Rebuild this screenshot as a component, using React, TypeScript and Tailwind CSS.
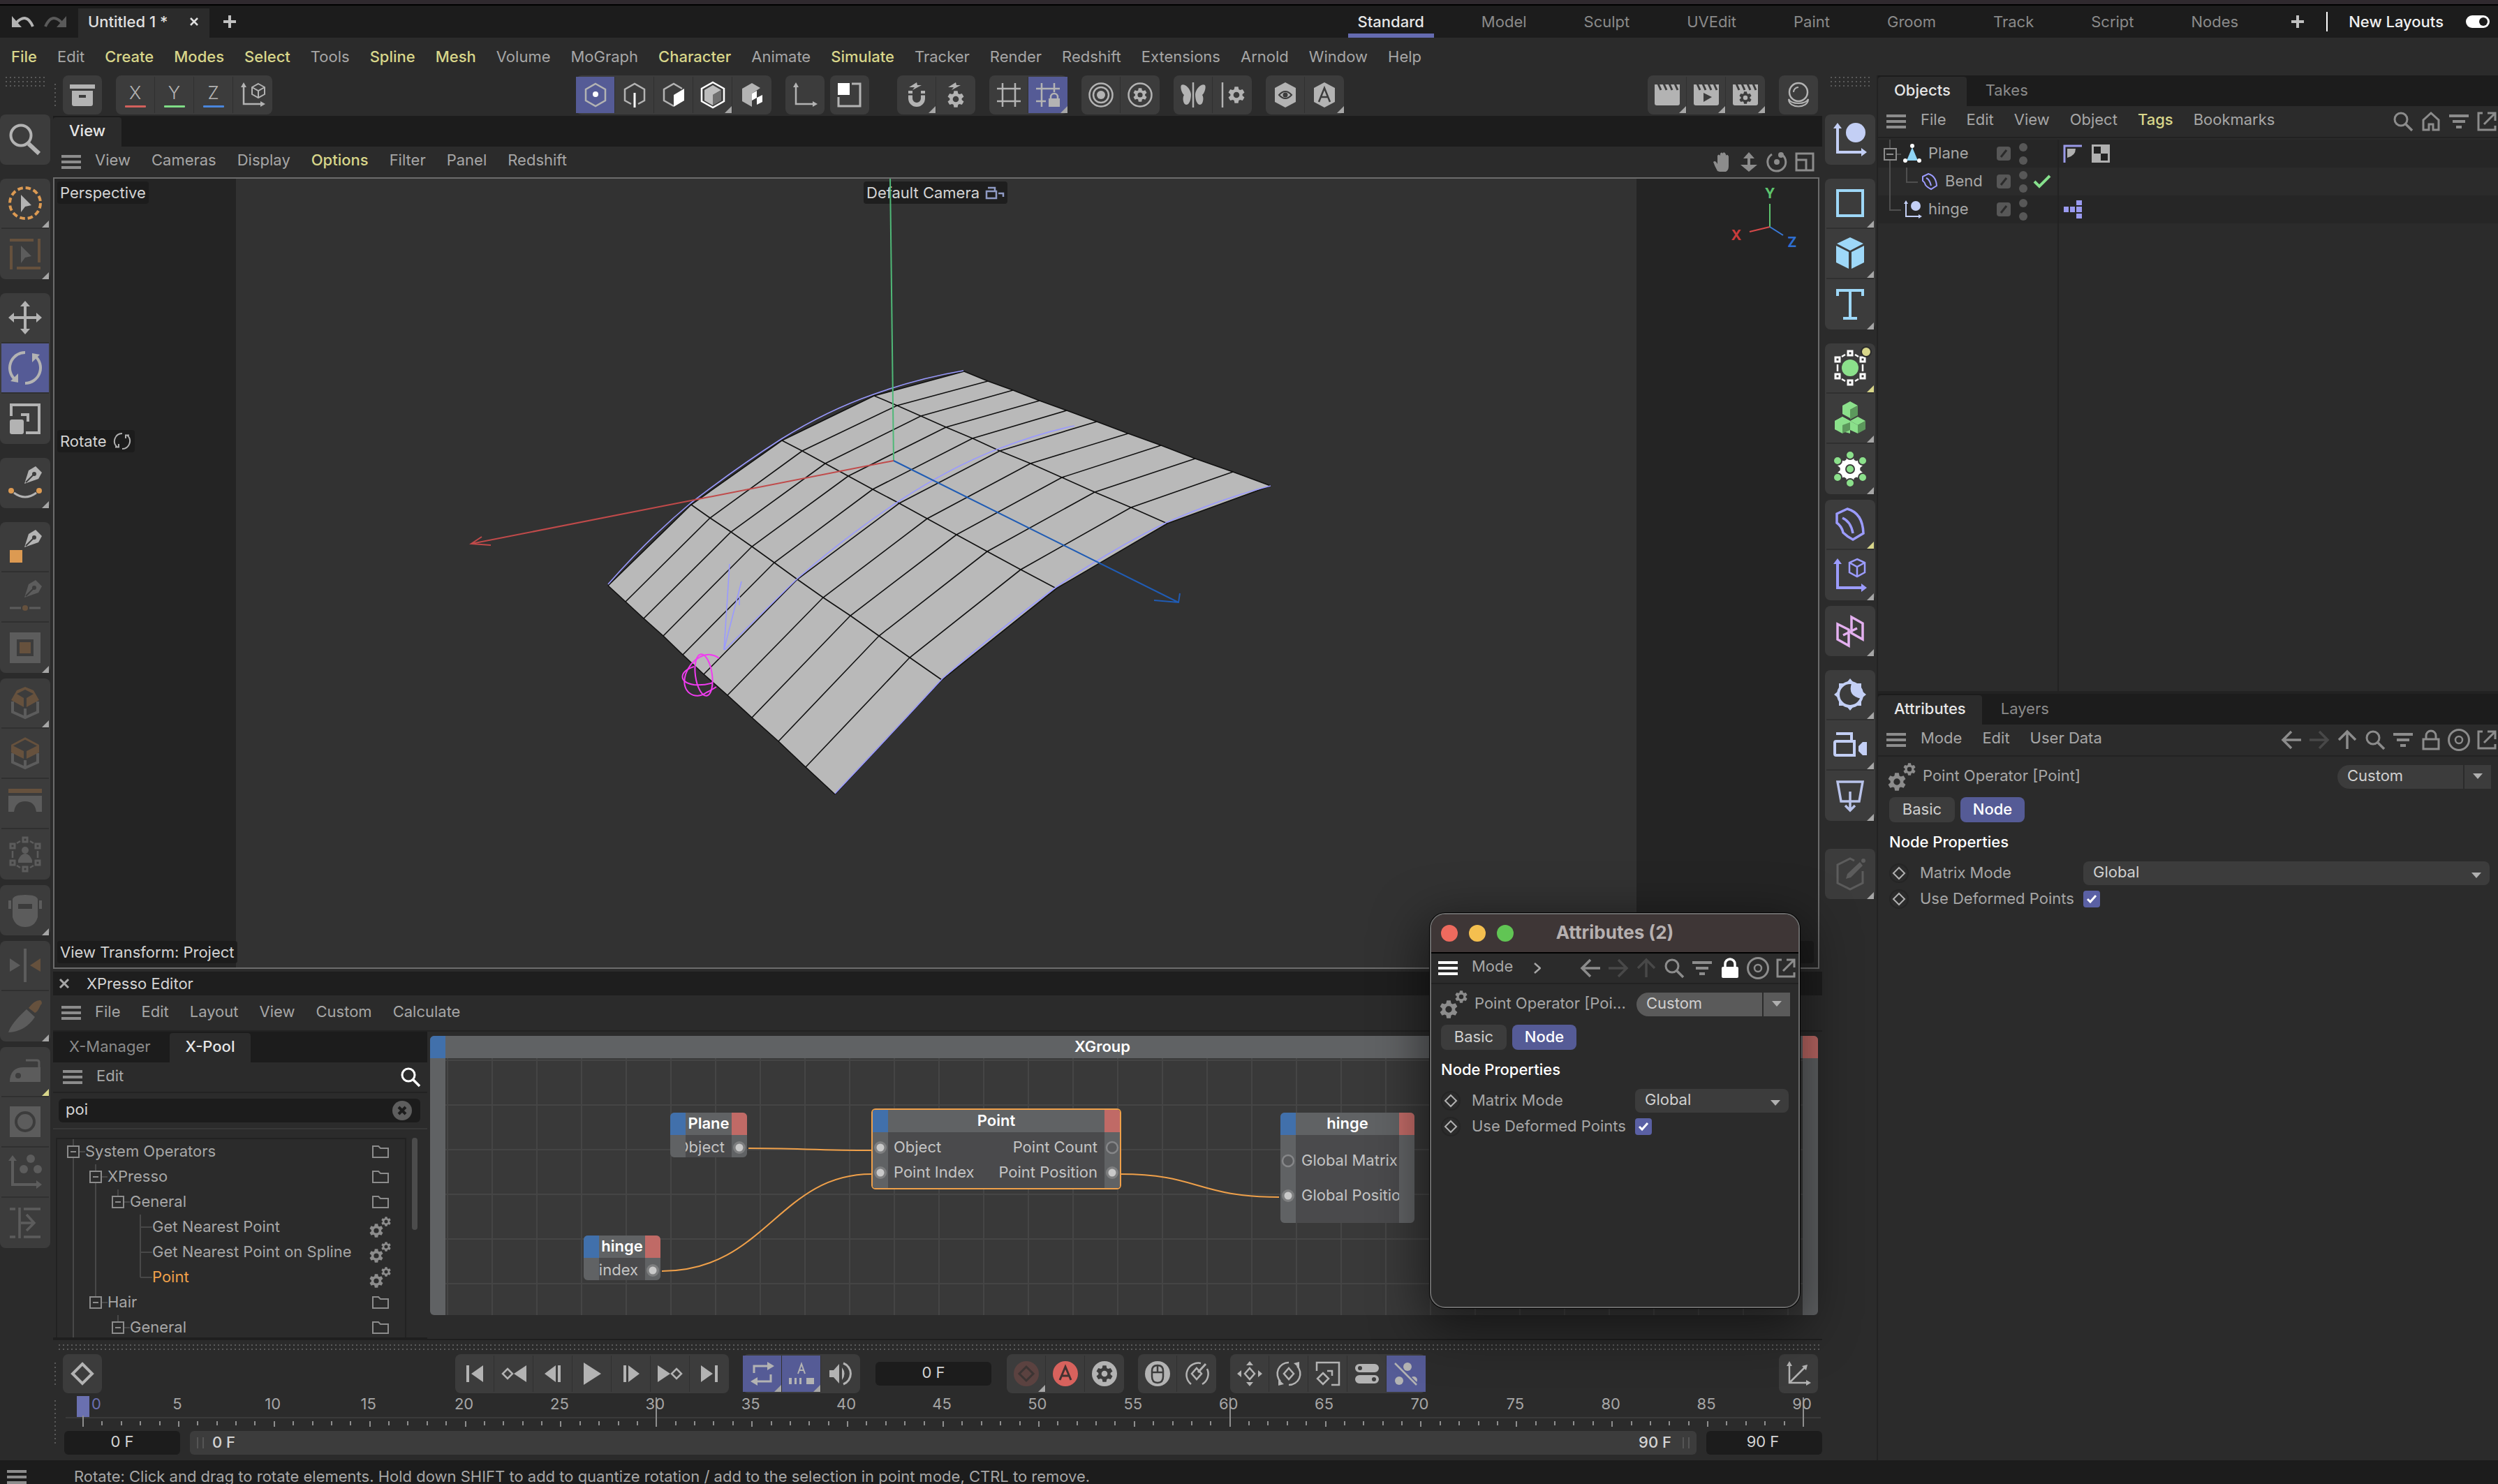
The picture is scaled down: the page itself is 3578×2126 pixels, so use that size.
import { useId, useState, type ReactNode } from "react";
import clsx from "clsx";

/* ---------- shared drawing helpers ---------- */

function Svg({ size, children, className }: { size: number; children: ReactNode; className?: string }) {
  return (
    <svg
      width={size}
      height={size}
      viewBox={`0 0 ${size} ${size}`}
      fill="none"
      className={clsx("shrink-0 overflow-visible", className)}
      aria-hidden="true"
    >
      {children}
    </svg>
  );
}

function gearPath(cx: number, cy: number, r: number, hole = 0.36, teeth = 6) {
  const pts: string[] = [];
  const step = (Math.PI * 2) / teeth;
  for (let i = 0; i < teeth; i++) {
    const a = i * step - Math.PI / 2;
    for (const [off, k] of [[-0.36, 0.72], [-0.2, 1], [0.2, 1], [0.36, 0.72]]) {
      const t = a + off * step * 1.05;
      pts.push(`${(cx + Math.cos(t) * r * k).toFixed(1)} ${(cy + Math.sin(t) * r * k).toFixed(1)}`);
    }
  }
  const h = r * hole;
  const ring = `M${cx - h} ${cy}a${h} ${h} 0 1 0 ${h * 2} 0a${h} ${h} 0 1 0 ${-h * 2} 0z`;
  return `M${pts.join("L")}z${hole ? ring : ""}`;
}

const Gear = ({ x, y, r, hole, fill = "currentColor" }: { x: number; y: number; r: number; hole?: number; fill?: string }) => (
  <path d={gearPath(x, y, r, hole)} fill={fill} fillRule="evenodd" />
);

const Burger = ({ className }: { className?: string }) => (
  <svg width="28" height="20" className={clsx("shrink-0", className)} aria-hidden="true">
    <path d="M0 2H28M0 10H28M0 18H28" stroke="currentColor" strokeWidth="4" />
  </svg>
);

const Gears = () => (
  <Svg size={40}>
    <Gear x={13} y={27} r={13} />
    <Gear x={31} y={9} r={9} />
  </Svg>
);

const Corner = ({ hot }: { hot?: boolean }) => (
  <svg width="10" height="10" className="absolute right-0 bottom-0" aria-hidden="true">
    <path d="M10 0V10H0z" fill={hot ? "#d8d68a" : "#a6a6a6"} />
  </svg>
);

const Grip = ({ className }: { className?: string }) => (
  <div
    className={clsx(
      "bg-[radial-gradient(circle,#5a5a5a_1px,transparent_1.5px)] bg-[size:6px_6px]",
      className,
    )}
  />
);

/* ---------- 36px toolbar icons ---------- */

const HEX = "M18 2L32 10V26L18 34L4 26V10z";
const CLAP = "M0 3H36V30Q36 33 33 33H3Q0 33 0 30z";

const axisLetter = (letter: string, color: string) => (
  <span className="flex flex-col items-center">
    <span className="text-[26px] leading-7 font-light">{letter}</span>
    <svg width="30" height="3" className="mt-1" aria-hidden="true">
      <rect width="30" height="3" rx="1" fill={color} />
    </svg>
  </span>
);

const clap = (extra?: ReactNode) => (
  <Svg size={36}>
    <path d={CLAP} fill="currentColor" />
    <path d="M5 2L9 11M13 2L17 11M21 2L25 11M29 2L33 11" stroke="#3c3c3c" strokeWidth="3" />
    {extra}
  </Svg>
);

const miniAxis = (
  <>
    <path d="M5 5V31H32" stroke="currentColor" strokeWidth="2.5" />
    <path d="M5 0L9 7H1zM36 31L29 27V35z" fill="currentColor" />
  </>
);

const hash = <path d="M9 1V35M27 1V35M1 9H35M1 27H35" stroke="currentColor" strokeWidth="2.5" />;
const bolt = <path d="M18 0L7 7H15L12 11L25 4H19z" fill="currentColor" />;
const smallDiamond = <path d="M18 10L25 18L18 26L11 18z" stroke="currentColor" strokeWidth="2.5" />;

const icon = {
  archive: (
    <Svg size={36}>
      <path d="M0 3H36V9H0zM3 12H33V31Q33 34 30 34H6Q3 34 3 31zM13 18V22H23V18z" fill="currentColor" fillRule="evenodd" />
    </Svg>
  ),
  axisCube: (
    <Svg size={36}>
      {miniAxis}
      <path d="M26 2L35 7V17L26 22L17 17V7zM17 7L26 12L35 7M26 12V22" stroke="currentColor" strokeWidth="2" />
    </Svg>
  ),
  points: (
    <Svg size={36}>
      <path d={HEX} stroke="currentColor" strokeWidth="2.5" />
      <circle cx="18" cy="17" r="4" fill="#fff" />
    </Svg>
  ),
  edges: (
    <Svg size={36}>
      <path d="M13 31L4 26V10L18 2L32 10V26L23 31" stroke="currentColor" strokeWidth="2.5" />
      <path d="M18 15V36" stroke="#fff" strokeWidth="3" />
    </Svg>
  ),
  polys: (
    <Svg size={36}>
      <path d="M18 34L4 26V10L18 2L30 9" stroke="currentColor" strokeWidth="2.5" />
      <path d="M18 18L33 9V26L18 35z" fill="#fff" />
    </Svg>
  ),
  model: (
    <Svg size={36}>
      <path d="M18 0L34 9V27L18 36L2 27V9z" stroke="#fff" strokeWidth="2.5" />
      <path d="M18 4L30 11L18 18V33L6 26V11z" fill="#bdbdbd" />
      <path d="M30 11V26L18 33V18z" fill="#6f6f6f" />
    </Svg>
  ),
  texture: (
    <Svg size={36}>
      <path d="M18 1L30 8L18 16V35L4 27V9z" fill="currentColor" />
      <path d="M18 16L25 12V22L18 26zM25 22L33 18V28L25 32z" fill="#fff" />
    </Svg>
  ),
  axis: <Svg size={36}>{miniAxis}</Svg>,
  workplane: (
    <Svg size={36}>
      <path d="M21 2H33V34H2V21" stroke="currentColor" strokeWidth="3" />
      <path d="M1 1H18V18H1z" fill="#fff" />
    </Svg>
  ),
  magnet: (
    <Svg size={36}>
      {bolt}
      <path d="M9 17V23A9 9 0 0 0 27 23V17" stroke="currentColor" strokeWidth="6" />
      <path d="M5 17.5H31" stroke="#3c3c3c" strokeWidth="2" />
      <path d="M6 12H12V16H6zM24 12H30V16H24z" fill="currentColor" />
    </Svg>
  ),
  snapGear: (
    <Svg size={36}>
      {bolt}
      <Gear x={18} y={24} r={12} />
    </Svg>
  ),
  grid: <Svg size={36}>{hash}</Svg>,
  gridLock: (
    <Svg size={36}>
      <path d="M9 1V35M27 1V14M1 9H35M1 27H15" stroke="currentColor" strokeWidth="2.5" />
      <path d="M19 23H35V35H19z" fill="currentColor" />
      <path d="M22 24V21A5 5 0 0 1 32 21V24" stroke="currentColor" strokeWidth="2.5" />
    </Svg>
  ),
  rings: (
    <Svg size={36}>
      <circle cx="18" cy="18" r="16.5" stroke="currentColor" strokeWidth="2.5" />
      <circle cx="18" cy="18" r="11" stroke="currentColor" strokeWidth="2.5" />
      <circle cx="18" cy="18" r="6" fill="currentColor" />
    </Svg>
  ),
  ringGear: (
    <Svg size={36}>
      <circle cx="18" cy="18" r="16.5" stroke="currentColor" strokeWidth="2.5" />
      <Gear x={18} y={18} r={10} />
    </Svg>
  ),
  butterfly: (
    <Svg size={36}>
      <path d="M18 0V36" stroke="currentColor" strokeWidth="2.5" />
      <path d="M15 17C14 8 5 1 1 4C-1 7 2 16 5 18C2 22 4 32 8 32C13 32 15 24 15 17zM21 17C22 8 31 1 35 4C37 7 34 16 31 18C34 22 32 32 28 32C23 32 21 24 21 17z" fill="currentColor" />
    </Svg>
  ),
  lineGear: (
    <Svg size={36}>
      <path d="M4 0V36" stroke="currentColor" strokeWidth="2.5" />
      <Gear x={24} y={18} r={12} />
    </Svg>
  ),
  hexEye: (
    <Svg size={36}>
      <path d="M18 0L33 8V28L18 36L3 28V8z" fill="currentColor" />
      <path d="M9 18Q18 8 27 18Q18 28 9 18z" stroke="#3c3c3c" strokeWidth="2" />
      <circle cx="18" cy="18" r="3.5" fill="#3c3c3c" />
    </Svg>
  ),
  hexA: (
    <Svg size={36}>
      <path d="M18 0L33 8V28L18 36L3 28V8z" fill="currentColor" />
      <path d="M10 28L18 8L26 28M13 21H23" stroke="#3c3c3c" strokeWidth="2.5" />
    </Svg>
  ),
  clap: clap(),
  clapPlay: clap(<path d="M14 15L26 21L14 28z" fill="#3c3c3c" />),
  clapGear: clap(<Gear x={18} y={22} r={9} fill="#3c3c3c" />),
  sphere: (
    <Svg size={36}>
      <circle cx="18" cy="14" r="13" stroke="currentColor" strokeWidth="2.5" />
      <path d="M11 14A7 7 0 0 1 18 7" stroke="currentColor" strokeWidth="2" />
      <path d="M4 24C4 38 32 38 32 24C28 32 8 32 4 24z" stroke="currentColor" strokeWidth="2" />
    </Svg>
  ),
  diamond: (
    <Svg size={36}>
      <path d="M18 4L32 18L18 32L4 18z" stroke="currentColor" strokeWidth="4" />
    </Svg>
  ),
  toStart: (
    <Svg size={36}>
      <path d="M6 6H10V30H6zM30 6V30L13 18z" fill="currentColor" />
    </Svg>
  ),
  prevKey: (
    <Svg size={36}>
      <path d="M36 6V30L18 18z" fill="currentColor" />
      <path d="M9 11L16 18L9 25L2 18z" stroke="currentColor" strokeWidth="2.5" />
    </Svg>
  ),
  prevFrame: (
    <Svg size={36}>
      <path d="M22 6V30L6 18zM25 6H29V30H25z" fill="currentColor" />
    </Svg>
  ),
  play: (
    <Svg size={36}>
      <path d="M6 2L31 18L6 34z" fill="currentColor" />
    </Svg>
  ),
  nextFrame: (
    <Svg size={36}>
      <path d="M14 6V30L30 18zM7 6H11V30H7z" fill="currentColor" />
    </Svg>
  ),
  nextKey: (
    <Svg size={36}>
      <path d="M0 6V30L18 18z" fill="currentColor" />
      <path d="M27 11L34 18L27 25L20 18z" stroke="currentColor" strokeWidth="2.5" />
    </Svg>
  ),
  toEnd: (
    <Svg size={36}>
      <path d="M26 6H30V30H26zM6 6V30L23 18z" fill="currentColor" />
    </Svg>
  ),
  loop: (
    <Svg size={36}>
      <path d="M6 17V7H28M30 19V29H8" stroke="currentColor" strokeWidth="3" />
      <path d="M25 1L35 7L25 13zM11 23L1 29L11 35z" fill="currentColor" />
    </Svg>
  ),
  frames: (
    <Svg size={36}>
      <path d="M13 18L18 4L23 18M15 13H21" stroke="currentColor" strokeWidth="2" />
      <path d="M0 24H4V33H0zM8 24H11V33H8zM15 24H18V33H15zM25 24H36V33H25z" fill="currentColor" />
    </Svg>
  ),
  sound: (
    <Svg size={36}>
      <path d="M2 13H8L16 4V32L8 23H2z" fill="currentColor" />
      <path d="M20 9Q27 18 20 27z" fill="currentColor" />
      <path d="M22 3A16 16 0 0 1 22 33" stroke="currentColor" strokeWidth="3" />
    </Svg>
  ),
  record: (
    <Svg size={36}>
      <circle cx="18" cy="18" r="18" fill="#5b4240" />
      <path d="M18 8L28 18L18 28L8 18z" stroke="#3c3433" strokeWidth="3" />
    </Svg>
  ),
  autoKey: (
    <Svg size={36}>
      <circle cx="18" cy="18" r="18" fill="#d8625d" />
      <path d="M10 27L18 8L26 27M13 21H23" stroke="#423231" strokeWidth="3" />
    </Svg>
  ),
  keyGear: (
    <Svg size={36}>
      <circle cx="18" cy="18" r="18" fill="currentColor" />
      <Gear x={18} y={18} r={12} fill="#3c3c3c" />
    </Svg>
  ),
  mouse: (
    <Svg size={36}>
      <circle cx="18" cy="18" r="18" fill="currentColor" />
      <path d="M10 16V14Q10 6 18 6T26 14V22Q26 31 18 31T10 22V16H26M18 6V16" stroke="#3c3c3c" strokeWidth="2.5" />
    </Svg>
  ),
  gauge: (
    <Svg size={36}>
      <path d="M10 33A17 17 0 0 1 24 3M33 11A17 17 0 0 1 26 33" stroke="currentColor" strokeWidth="2.5" />
      {smallDiamond}
      <path d="M20 16L31 4" stroke="currentColor" strokeWidth="3" />
    </Svg>
  ),
  keyMove: (
    <Svg size={36}>
      {smallDiamond}
      <path d="M18 0L23 6H13zM18 36L23 30H13zM0 18L6 13V23zM36 18L30 13V23z" fill="currentColor" />
    </Svg>
  ),
  keyRotate: (
    <Svg size={36}>
      {smallDiamond}
      <path d="M18 2A16 16 0 0 0 6 29M18 34A16 16 0 0 0 30 7" stroke="currentColor" strokeWidth="2.5" />
      <path d="M3 26L11 33L3 35zM33 10L25 3L33 1z" fill="currentColor" />
    </Svg>
  ),
  keyScale: (
    <Svg size={36}>
      <path d="M2 14V2H34V34H23M17 14H24V21" stroke="currentColor" strokeWidth="2.5" />
      <path d="M11 17L19 25L11 33L3 25z" stroke="currentColor" strokeWidth="2.5" />
    </Svg>
  ),
  keyParam: (
    <Svg size={36}>
      <path d="M7 4H29A6 6 0 0 1 29 16H7A6 6 0 0 1 7 4zM7 20H29A6 6 0 0 1 29 32H7A6 6 0 0 1 7 20z" fill="currentColor" />
      <path d="M8 7A3 3 0 1 0 8 13A3 3 0 1 0 8 7zM28 23A3 3 0 1 0 28 29A3 3 0 1 0 28 23z" fill="#3c3c3c" />
    </Svg>
  ),
  keyPla: (
    <Svg size={36}>
      <circle cx="8" cy="28" r="6" fill="currentColor" />
      <circle cx="20" cy="8" r="6" fill="currentColor" />
      <circle cx="29" cy="27" r="5" fill="currentColor" />
      <path d="M2 4L32 33" stroke="#555b96" strokeWidth="6" />
      <path d="M2 3L33 34" stroke="currentColor" strokeWidth="2.5" />
    </Svg>
  ),
  curve: (
    <Svg size={36}>
      <path d="M5 3V31H33M6 30L28 8" stroke="currentColor" strokeWidth="2.5" />
      <path d="M5 0L9 7H1zM36 31L29 27V35zM31 5L29 13L23 7z" fill="currentColor" />
    </Svg>
  ),
};

/* ---------- 48px side palette icons ---------- */

const DIM = "#5c5c5c";
const BROWN = "#66513d";

const nib = (color: string) => (
  <>
    <path d="M23 25L29 6L39 0L48 9L43 18z" fill={color} />
    <path d="M25 23L36 12" stroke="#3c3c3c" strokeWidth="2" />
    <circle cx="37" cy="11" r="3" fill="#3c3c3c" />
  </>
);

const cage = (color: string) => (
  <>
    <path
      d="M21 0H27V6H21zM21 42H27V48H21zM3 9H9V15H3zM39 9H45V15H39zM3 33H9V39H3zM39 33H45V39H39z"
      stroke={color}
      strokeWidth="3"
    />
    <path d="M6 19V29M42 19V29M12 8L17 5M31 5L36 8M12 40L17 43M31 43L36 40" stroke={color} strokeWidth="2.5" />
  </>
);

const bigAxis = (
  <>
    <path d="M6 6V42H41" stroke="currentColor" strokeWidth="4" />
    <path d="M6 0L12 8H0zM48 42L40 36V48z" fill="currentColor" />
  </>
);

const cursor = "M18 12V37L24 29L33 27z";

const side = {
  search: (
    <Svg size={48}>
      <circle cx="18" cy="18" r="14.5" stroke="currentColor" strokeWidth="4" />
      <path d="M29 30L44 44" stroke="currentColor" strokeWidth="6" />
    </Svg>
  ),
  liveSelect: (
    <Svg size={48}>
      <circle cx="24" cy="24" r="22" stroke="#dc9a52" strokeWidth="4" strokeDasharray="7.5 4.02" />
      <path d={cursor} fill="currentColor" />
    </Svg>
  ),
  rectSelect: (
    <Svg size={48}>
      <path d="M2 4H36M44 2V36M46 44H12M4 46V12" stroke={BROWN} strokeWidth="4" />
      <path d={cursor} fill={DIM} />
    </Svg>
  ),
  move: (
    <Svg size={48}>
      <path d="M24 5V43M5 24H43" stroke="currentColor" strokeWidth="4" />
      <path d="M24 0L31 8H17zM24 48L31 40H17zM0 24L8 17V31zM48 24L40 17V31z" fill="currentColor" />
    </Svg>
  ),
  rotate: (
    <Svg size={48}>
      <path d="M24 2A22 22 0 0 0 10 41M24 46A22 22 0 0 0 38 7" stroke="currentColor" strokeWidth="4" />
      <path d="M3 43L14 45V32zM45 5L34 3V16z" fill="currentColor" />
    </Svg>
  ),
  scale: (
    <Svg size={48}>
      <path d="M4 20V4H44V44H25M18 18H28V28" stroke="currentColor" strokeWidth="4" />
      <rect x="2" y="25" width="20" height="21" rx="3" fill="currentColor" />
    </Svg>
  ),
  splinePen: (
    <Svg size={48}>
      {nib("currentColor")}
      <path d="M8 38Q24 50 40 38" stroke="currentColor" strokeWidth="3" />
      <circle cx="4" cy="35" r="4" fill="#dc9a52" />
      <circle cx="44" cy="35" r="4" fill="#dc9a52" />
    </Svg>
  ),
  polyPen: (
    <Svg size={48}>
      {nib("currentColor")}
      <rect x="2" y="29" width="18" height="18" fill="#dc9a52" />
    </Svg>
  ),
  linePen: (
    <Svg size={48}>
      {nib(DIM)}
      <path d="M2 40H18M30 40H46" stroke={DIM} strokeWidth="3" />
      <circle cx="24" cy="40" r="4" fill={BROWN} />
    </Svg>
  ),
  inset: (
    <Svg size={48}>
      <rect x="2" y="2" width="44" height="44" fill={DIM} />
      <rect x="12" y="12" width="24" height="24" fill="#3c3c3c" />
      <rect x="16" y="16" width="16" height="16" fill={BROWN} />
    </Svg>
  ),
  bevelCube: (
    <Svg size={48}>
      <path d="M6 22V37L24 45L42 37V22M24 32V45" stroke={DIM} strokeWidth="4" />
      <path d="M4 20L12 6L24 1L36 6L44 20L26 30V17L36 11L24 5L12 11L22 17V30z" fill={BROWN} />
    </Svg>
  ),
  openCube: (
    <Svg size={48}>
      <path d="M6 24V37L24 45L42 37V24M24 34V45" stroke={DIM} strokeWidth="4" />
      <path d="M5 13L24 3L43 13" stroke={BROWN} strokeWidth="3" />
      <path d="M4 12L22 21V32L4 23zM44 12L26 21V32L44 23z" fill={BROWN} />
    </Svg>
  ),
  bridge: (
    <Svg size={48}>
      <path d="M0 3H48V9H0z" fill={BROWN} />
      <path d="M0 13H48V36H40Q38 21 24 21T8 36H0z" fill={DIM} />
    </Svg>
  ),
  lattice: (
    <Svg size={48}>
      {cage(DIM)}
      <circle cx="24" cy="18" r="5" fill={DIM} />
      <path d="M14 36V32Q18 23 24 23T34 32V36z" fill={DIM} />
    </Svg>
  ),
  sculpt: (
    <Svg size={48}>
      <path d="M6 8Q8 2 24 2T42 8V34Q38 48 24 48T6 34zM14 15V22H34V15z" fill={DIM} fillRule="evenodd" />
      <path d="M0 10H4V22H0zM44 10H48V22H44z" fill={DIM} />
    </Svg>
  ),
  mirror: (
    <Svg size={48}>
      <path d="M22 0H26V48H22z" fill={DIM} />
      <path d="M2 14L17 24L2 33z" fill={DIM} />
      <path d="M46 14L31 24L46 33z" fill={BROWN} />
    </Svg>
  ),
  knife: (
    <Svg size={48}>
      <path d="M26 14L38 25Q24 46 0 47Q4 34 26 14z" fill={DIM} />
      <path d="M29 12Q38 0 46 1Q50 5 46 8Q42 18 38 19z" fill={BROWN} />
    </Svg>
  ),
  iron: (
    <Svg size={48}>
      <path d="M25 8H41Q44 8 44 11V20" stroke={DIM} strokeWidth="3" />
      <path d="M2 39Q2 18 22 18H46V39z" fill={DIM} />
      <circle cx="14" cy="30" r="4" fill="#3c3c3c" />
    </Svg>
  ),
  solidify: (
    <Svg size={48}>
      <rect x="2" y="2" width="44" height="44" fill={DIM} />
      <circle cx="24" cy="24" r="13" stroke="#3c3c3c" strokeWidth="4" />
    </Svg>
  ),
  scatter: (
    <Svg size={48} className="text-[#5c5c5c]">
      {bigAxis}
      <circle cx="22" cy="20" r="6" fill={DIM} />
      <circle cx="32" cy="5" r="6" fill={DIM} />
      <circle cx="42" cy="20" r="6" fill={DIM} />
    </Svg>
  ),
  extend: (
    <Svg size={48}>
      <path d="M2 4H10M22 4H46M2 44H10M22 44H46M16 2V46M18 24H36M26 12L37 24L26 35" stroke={DIM} strokeWidth="3.5" />
    </Svg>
  ),
  nullObj: (
    <Svg size={48} className="text-[#c3cff5]">
      {bigAxis}
      <circle cx="32" cy="14" r="14" fill="currentColor" />
    </Svg>
  ),
  rectSpline: (
    <Svg size={48}>
      <rect x="6" y="6" width="36" height="36" stroke="#9ed8f8" strokeWidth="4" />
    </Svg>
  ),
  cube: (
    <Svg size={48}>
      <path d="M24 1L43 10L24 20L5 10zM4 13L22 22V46L4 37zM44 13L26 22V46L44 37z" fill="#9ed8f8" />
    </Svg>
  ),
  text: (
    <Svg size={48}>
      <path d="M6 12V4H42V12M24 4V44M14 44H34" stroke="#9ed8f8" strokeWidth="4" />
    </Svg>
  ),
  subdiv: (
    <Svg size={48}>
      {cage("#fff")}
      <circle cx="24" cy="24" r="12" fill="#8be08b" />
      <circle cx="47" cy="1" r="7" fill="#d8d68a" stroke="#2b2b2b" strokeWidth="2" />
    </Svg>
  ),
  cloner: (
    <Svg size={48}>
      <path d="M24 0L35 6L24 12L13 6zM13 6L24 12V24L13 18zM13 22L24 28V46L2 40V28zM35 22L46 28L35 34L24 28z" fill="#8be08b" />
      <path d="M2 28L13 22L24 28L13 34zM2 28L13 34V46L2 40z" fill="#8be08b" />
      <path d="M35 6V20L24 26V12zM24 30V41L13 46V34zM46 28V40L35 46V34z" fill="#5c985c" />
      <path d="M24 28L35 34V46L24 41z" fill="#8be08b" />
    </Svg>
  ),
  field: (
    <Svg size={48}>
      <Gear x={24} y={24} r={20} hole={0} fill="#fff" />
      <circle cx="24" cy="24" r="6" fill="#8be08b" stroke="#3c3c3c" strokeWidth="2" />
      {[[24, 4], [24, 44], [6, 12], [42, 12], [6, 36], [42, 36]].map(([x, y]) => (
        <circle key={`${x}-${y}`} cx={x} cy={y} r="6" fill="#8be08b" stroke="#3c3c3c" strokeWidth="2" />
      ))}
    </Svg>
  ),
  bend: (
    <Svg size={48}>
      <path d="M5 9L20 2Q42 8 43 37L28 46Q20 42 14 36Q12 27 5 22z" stroke="#9c9cff" strokeWidth="3.5" />
      <path d="M13 15Q25 20 28 37" stroke="#9c9cff" strokeWidth="3.5" />
    </Svg>
  ),
  axisDeform: (
    <Svg size={48} className="text-[#9c9cff]">
      {bigAxis}
      <path d="M34 1L45 6V20L34 26L23 20V6zM23 6L34 12L45 6M34 12V26" stroke="currentColor" strokeWidth="2.5" />
    </Svg>
  ),
  mograph: (
    <Svg size={48}>
      <path d="M6 14L22 22V45L6 36zM26 4L42 13V36L26 27zM14 30L34 20" stroke="#e4b0f0" strokeWidth="3.5" />
    </Svg>
  ),
  light: (
    <Svg size={48}>
      <circle cx="24" cy="24" r="17" stroke="#c3cff5" strokeWidth="4" />
      <path d="M24 1L29 7H19zM24 47L29 41H19zM1 24L7 19V29zM47 24L41 19V29zM8 8H15L8 15zM40 8H33L40 15zM8 40H15L8 33zM40 40H33L40 33z" fill="#c3cff5" />
      <path d="M26 8Q20 26 40 30Q46 10 26 8z" fill="#c3cff5" />
    </Svg>
  ),
  camera: (
    <Svg size={48}>
      <path d="M4 8H26V18M4 19H30V39H4Q2 39 2 37V21Q2 19 4 19z" stroke="#c3cff5" strokeWidth="4" />
      <path d="M36 26L42 20H48V39H42L36 33z" fill="#c3cff5" />
    </Svg>
  ),
  stage: (
    <Svg size={48}>
      <path d="M6 4H42L37 32H11zM24 18V44M17 38L24 45L31 38" stroke="#b9c3ea" strokeWidth="3.5" />
    </Svg>
  ),
  editObj: (
    <Svg size={48}>
      <path d="M30 5L24 2L6 11V37L24 46L42 37V20" stroke={DIM} strokeWidth="3" />
      <path d="M18 31L20 24L38 7L42 12L25 29z" fill={DIM} />
      <circle cx="43" cy="5" r="3" fill={DIM} />
    </Svg>
  ),
};

/* ---------- 28px panel header icons ---------- */

const head = {
  back: <path d="M28 14H3M14 2L2 14L14 26" stroke="currentColor" strokeWidth="3.5" />,
  forward: <path d="M0 14H25M14 2L26 14L14 26" stroke="currentColor" strokeWidth="3.5" />,
  up: <path d="M14 27V3M2 14L14 2L26 14" stroke="currentColor" strokeWidth="3.5" />,
  search: (
    <>
      <circle cx="11" cy="11" r="9" stroke="currentColor" strokeWidth="3" />
      <path d="M18 18L27 27" stroke="currentColor" strokeWidth="3.5" />
    </>
  ),
  home: <path d="M3 26V12L14 2L25 12V26H17V18H11V26z" stroke="currentColor" strokeWidth="3" />,
  filter: <path d="M0 6H28M5 14H23M10 22H18" stroke="currentColor" strokeWidth="4" />,
  lock: (
    <>
      <rect x="3" y="13" width="22" height="14" stroke="currentColor" strokeWidth="3" />
      <path d="M7 12V8A7 7 0 0 1 21 8V12" stroke="currentColor" strokeWidth="3" />
    </>
  ),
  locked: (
    <>
      <rect x="2" y="12" width="24" height="16" rx="2" fill="currentColor" />
      <path d="M7 14V8A7 7 0 0 1 21 8V14" stroke="currentColor" strokeWidth="3.5" />
    </>
  ),
  target: (
    <>
      <circle cx="14" cy="14" r="14.5" stroke="currentColor" strokeWidth="3" />
      <circle cx="14" cy="14" r="5" stroke="currentColor" strokeWidth="2.5" />
    </>
  ),
  external: (
    <path d="M8 2H2V26H26V20M15 2H26V13M10 18L25 3" stroke="currentColor" strokeWidth="3" />
  ),
  hand: (
    <path
      d="M9 27Q5 20 3 14Q6 11 9 17V5Q11 2 13 5V2Q15 -1 17 2V1Q19 -1 21 3V5Q23 2 25 6V20Q25 26 21 28H12z"
      fill="currentColor"
    />
  ),
  dolly: <path d="M14 0L22 9H16V18H26L14 28L2 18H12V9H6z" fill="currentColor" />,
  orbit: (
    <>
      <path d="M7 3A13 13 0 1 0 22 4" stroke="currentColor" strokeWidth="3" />
      <circle cx="14" cy="14" r="4" fill="currentColor" />
      <circle cx="20" cy="4" r="4" fill="currentColor" />
    </>
  ),
  panes: <path d="M2 2H26V26H2zM2 11H16V26" stroke="currentColor" strokeWidth="3" />,
};

type HeadIcon = keyof typeof head;

function HeadIcons({ names, className }: { names: [HeadIcon, string, string?][]; className?: string }) {
  return (
    <div className={clsx("ml-auto flex items-center gap-3 text-[#8c8c8c]", className)}>
      {names.map(([name, label, color]) => (
        <button key={name} aria-label={label} className={color}>
          <Svg size={28}>{head[name]}</Svg>
        </button>
      ))}
    </div>
  );
}

/* ---------- bars and buttons ---------- */

type Tool = { art: ReactNode; label: string; on?: boolean; more?: boolean; hot?: boolean };

function ToolGroup({ tools, className }: { tools: Tool[]; className?: string }) {
  return (
    <div className={clsx("flex h-14 shrink-0 divide-x divide-[#303030] rounded-lg bg-[#3c3c3c] py-0.5", className)}>
      {tools.map((t) => (
        <button
          key={t.label}
          aria-label={t.label}
          className={clsx("relative flex w-14 items-center justify-center text-[#b3b3b3]", t.on && "bg-[#555b96]")}
        >
          {t.art}
          {t.more && <Corner />}
        </button>
      ))}
    </div>
  );
}

function SideGroup({ tools, className }: { tools: Tool[]; className?: string }) {
  return (
    <div className={clsx("flex w-[72px] shrink-0 flex-col divide-y-2 divide-[#303030] rounded-lg bg-[#3c3c3c] px-0.5", className)}>
      {tools.map((t) => (
        <button
          key={t.label}
          aria-label={t.label}
          className={clsx("relative flex h-[72px] items-center justify-center text-[#b3b3b3]", t.on && "bg-[#555b96]")}
        >
          {t.art}
          {(t.more || t.hot) && <Corner hot={t.hot} />}
        </button>
      ))}
    </div>
  );
}

function Menu({ items, hot = [], className }: { items: string[]; hot?: string[]; className?: string }) {
  return (
    <div className={clsx("flex items-center whitespace-nowrap text-[#a6a6a6]", className)}>
      {items.map((item) => (
        <button key={item} className={clsx(hot.includes(item) && "font-medium text-[#d8d68a]")}>
          {item}
        </button>
      ))}
    </div>
  );
}

function Tabs({ items, active }: { items: string[]; active: string }) {
  return (
    <div className="flex h-11 shrink-0 items-stretch gap-1 bg-[#1c1c1c] pt-0.5">
      {items.map((item) => (
        <button
          key={item}
          className={clsx(
            "px-[23px] pb-1",
            item === active ? "rounded-t bg-[#2b2b2b] font-medium text-[#e6e6e6]" : "text-[#8a8a8a]",
          )}
        >
          {item}
        </button>
      ))}
    </div>
  );
}

/* ---------- viewport ---------- */

// Bent plane, five rows of eleven vertices, in screen space.
const rows: [number, number][][] = [
  [[211, 339], [236, 362], [262, 386], [290, 411], [318, 438], [348, 466], [382, 496], [417, 528], [455, 562], [494, 599], [536, 638]],
  [[330, 223], [357, 242], [387, 262], [417, 283], [449, 306], [482, 330], [519, 356], [558, 382], [599, 411], [643, 442], [689, 474]],
  [[460, 131], [489, 146], [522, 164], [555, 182], [590, 201], [628, 221], [668, 243], [710, 266], [754, 290], [802, 316], [853, 343]],
  [[592, 67], [625, 81], [659, 96], [695, 112], [733, 128], [772, 146], [816, 164], [861, 184], [908, 205], [960, 227], [1012, 250]],
  [[721, 32], [755, 46], [791, 59], [829, 74], [868, 88], [911, 104], [956, 121], [1003, 138], [1052, 157], [1106, 176], [1160, 196]],
];

const line = (pts: [number, number][]) => pts.map((p) => p.join(",")).join(" ");
const columns = rows[0].map((_, i) => rows.map((r) => r[i]));
const outline = [...rows[0], ...columns[10], ...[...rows[4]].reverse(), ...[...columns[0]].reverse()];

function Mesh() {
  return (
    <svg width="1200" height="920" viewBox="0 -244 1200 920" fill="none" className="absolute top-0 left-[582px] max-w-none" aria-hidden="true">
      <g strokeWidth="2">
        <polygon points={line(outline)} fill="#b9b9b9" />
        <g stroke="#111" strokeWidth="1.6">
          {rows.map((r, i) => <polyline key={i} points={line(r)} />)}
          {columns.map((c, i) => <polyline key={i} points={line(c)} />)}
        </g>
        <g stroke="#9a9aff" strokeWidth="1.6">
          <path d="M211 337Q268 272 329 221Q395 170 459 129Q525 88 591 65Q655 42 720 31" />
          <path d="M536 637Q618 550 690 472Q770 402 853 341Q930 288 1012 248Q1090 214 1160 196" />
          <path d="M385 308L377 431L402 333M399 355V367M378 431L482 329Q552 268 626 219Q700 170 770 143Q830 120 879 110" />
        </g>
        <path d="M615 -246L620 160" stroke="#4fb877" />
        <path d="M620 160L15 279M30 269L15 279L43 281" stroke="#c04a4a" />
        <path d="M620 160L1028 363M1030 350L1028 363L993 360" stroke="#205cb4" />
        <g stroke="#f03cf0">
          <path d="M370 443C352 430 330 444 322 466C314 492 336 504 352 492C360 488 366 484 366 484" />
          <ellipse cx="348" cy="467" rx="12" ry="30" transform="rotate(-8 348 467)" />
          <path d="M334 455C312 462 312 478 334 481Q350 482 361 478" />
        </g>
      </g>
    </svg>
  );
}

const Hud = ({ className, children }: { className?: string; children?: ReactNode }) => (
  <div className={clsx("absolute flex h-8 items-center gap-2 rounded bg-[#1c1c1c]/90 px-1 whitespace-nowrap text-[#d4d4d4]", className)}>
    {children}
  </div>
);

function Viewport() {
  return (
    <div className="relative mr-1 min-h-0 flex-1 overflow-hidden border-2 border-[#6c6c6c] bg-[#242424]">
      <div className="absolute inset-y-0 right-[260px] left-[260px] bg-[#323232]" />
      <Hud className="top-1 left-[1159px]">
        Default Camera
        <svg width="28" height="20" fill="none" aria-hidden="true">
          <path d="M4 3H14V7M2 8H16V18H2zM19 11H26V16" stroke="#8f9ac4" strokeWidth="2.5" />
        </svg>
      </Hud>
      <Mesh />
      <Hud className="top-1 left-1">Perspective</Hud>
      <Hud className="top-[360px] left-1">
        Rotate
        <svg width="28" height="24" viewBox="-4 0 56 48" fill="none" aria-hidden="true">
          <path d="M24 2A22 22 0 0 0 10 41M24 46A22 22 0 0 0 38 7M4 41H14V32M44 7H34V16" stroke="#b0b0b0" strokeWidth="4" />
        </svg>
      </Hud>
      <Hud className="bottom-1.5 left-1">View Transform: Project</Hud>
      <Hud className="right-1.5 bottom-1.5 w-60" />
      {/* axis gizmo */}
      <svg width="110" height="100" className="absolute top-2 right-[18px] text-[20px] font-bold" aria-hidden="true">
        <g strokeWidth="2">
          <path d="M59 28V61" stroke="#5ec46e" />
          <path d="M59 61L30 68" stroke="#d84a4a" />
          <path d="M59 61L78 73" stroke="#3a7ad8" />
        </g>
        <text x="59" y="20" textAnchor="middle" fill="#5ec46e">Y</text>
        <text x="11" y="80" textAnchor="middle" fill="#c83c3c">X</text>
        <text x="91" y="90" textAnchor="middle" fill="#2e6ed0">Z</text>
      </svg>
    </div>
  );
}

/* ---------- XPresso ---------- */

const pool: { text: string; depth: number; leaf?: boolean; on?: boolean }[] = [
  { text: "System Operators", depth: 0 },
  { text: "XPresso", depth: 1 },
  { text: "General", depth: 2 },
  { text: "Get Nearest Point", depth: 3, leaf: true },
  { text: "Get Nearest Point on Spline", depth: 3, leaf: true },
  { text: "Point", depth: 3, leaf: true, on: true },
  { text: "Hair", depth: 1 },
  { text: "General", depth: 2 },
];

const indent = ["pl-3.5", "pl-[46px]", "pl-[78px]", "pl-[136px]"];

const Expander = () => (
  <svg width="26" height="18" className="shrink-0" fill="none" aria-hidden="true">
    <path d="M1 1H17V17H1zM5 9H13" stroke="#8c8c8c" strokeWidth="2" />
    <path d="M18 9H26" stroke="#4a4a4a" strokeWidth="2" />
  </svg>
);

function XPool() {
  const [query, setQuery] = useState("poi");
  return (
    <div className="flex w-[536px] shrink-0 flex-col border-b-2 border-[#1f1f1f]">
      <Tabs items={["X-Manager", "X-Pool"]} active="X-Pool" />
      <div className="flex h-11 shrink-0 items-center gap-5 border-b-2 border-[#222] pr-2.5 pl-3.5 text-[#8c8c8c]">
        <Burger />
        <Menu items={["Edit"]} className="pb-1" />
        <HeadIcons names={[["search", "Search", "text-white"]]} />
      </div>
      <div className="flex h-[52px] shrink-0 items-start border-b-2 border-[#383838] pt-2 pr-2.5 pl-2">
        <div className="flex h-[34px] flex-1 items-center rounded-md bg-[#1c1c1c] pr-3 pl-2.5">
          <input
            aria-label="Search operators"
            value={query}
            onChange={(e) => setQuery(e.target.value)}
            className="min-w-0 flex-1 bg-transparent pb-1 text-[#d4d4d4] outline-none"
          />
          <button aria-label="Clear search" onClick={() => setQuery("")}>
            <Svg size={28}>
              <circle cx="14" cy="14" r="14" fill="#5e5e5e" />
              <path d="M9 9L19 19M19 9L9 19" stroke="#1c1c1c" strokeWidth="4" />
            </Svg>
          </button>
        </div>
      </div>
      <div className="flex min-h-0 flex-1 gap-2 pt-3 pl-1">
        <div className="relative flex-1 overflow-hidden border-2 border-b-0 border-[#222]">
          <svg width="240" height="300" fill="none" className="absolute top-0 left-0" aria-hidden="true">
            <path
              d="M23 0V300M55 36V236M87 72V82M119 108V198M119 126H136M119 162H136M119 198H136M87 252V262"
              stroke="#484848"
              strokeWidth="2"
            />
          </svg>
          <ul className="relative">
            {pool.map((row, i) => (
              <li
                key={i}
                className={clsx("flex h-9 items-center pr-5 whitespace-nowrap", indent[row.depth], row.on ? "text-[#efa04a]" : "text-[#a6a6a6]")}
              >
                {!row.leaf && <span className="bg-[#2b2b2b]"><Expander /></span>}
                <span className="pb-0.5">{row.text}</span>
                <span className="ml-auto flex w-[30px] justify-center text-[#8c8c8c]">
                  {row.leaf ? (
                    <Svg size={30}>
                      <Gear x={9} y={20} r={10} />
                      <Gear x={23} y={7} r={7} />
                    </Svg>
                  ) : (
                    <svg width="26" height="20" fill="none" aria-hidden="true">
                      <path d="M2 18V2H10L13 5H24V18z" stroke="currentColor" strokeWidth="2" />
                    </svg>
                  )}
                </span>
              </li>
            ))}
          </ul>
        </div>
        <div className="mr-3.5 h-[132px] w-2 rounded-full bg-[#4c4c4c]" />
      </div>
    </div>
  );
}

const Port = ({ wired }: { wired?: boolean }) => (
  <svg width="22" height="20" className="shrink-0" fill="none" aria-hidden="true">
    {wired ? (
      <>
        <circle cx="11" cy="10" r="9" fill="#7e7f80" />
        <circle cx="11" cy="10" r="5.5" fill="#c9c9c9" />
      </>
    ) : (
      <circle cx="11" cy="10" r="8" fill="#58595b" stroke="#858688" strokeWidth="2.5" />
    )}
  </svg>
);

type Pin = { text: string; wired?: boolean };

function XNode({ title, rows: pins, className, bodyClass, rowClass = "h-9", selected }: {
  title: string;
  rows: { in?: Pin; out?: Pin }[];
  className: string;
  bodyClass?: string;
  rowClass?: string;
  selected?: boolean;
}) {
  return (
    <div
      className={clsx(
        "absolute flex flex-col overflow-hidden rounded-md text-[#c4c4c4]",
        selected && "border-2 border-[#efa04a]",
        className,
      )}
    >
      <div className="flex h-8 shrink-0 justify-between bg-[#606264]">
        <span className="w-[22px] bg-[#4170ab]" />
        <span className="leading-[30px] font-semibold text-white">{title}</span>
        <span className="w-[22px] bg-[#c06a66]" />
      </div>
      <div className={clsx("flex-1 border-x-[22px] border-[#606264] bg-[#4a4a4c]", bodyClass)}>
        {pins.map((pin, i) => (
          <div key={i} className={clsx("-mx-[22px] flex items-center", rowClass)}>
            {pin.in ? <Port wired={pin.in.wired} /> : <span className="w-[22px] shrink-0" />}
            <span className="flex min-w-0 flex-1 overflow-hidden pb-0.5 whitespace-nowrap">
              {pin.in && <span className="pl-2">{pin.in.text}</span>}
              {pin.out && <span className="flex min-w-0 flex-1 justify-end pr-2.5">{pin.out.text}</span>}
            </span>
            {pin.out ? <Port wired={pin.out.wired} /> : <span className="w-[22px] shrink-0" />}
          </div>
        ))}
      </div>
    </div>
  );
}

function XGroup() {
  return (
    <div className="mt-1.5 mr-1.5 ml-1 flex h-[400px] min-w-0 flex-1 flex-col overflow-hidden rounded-md">
      <div className="relative flex flex-1 flex-col">
        <div className="flex h-8 shrink-0 justify-between bg-[#606264]">
          <span className="w-[22px] bg-[#4170ab]" />
          <span className="pr-[62px] leading-[30px] font-semibold text-white">XGroup</span>
          <span className="w-[22px] bg-[#c06a66]" />
        </div>
        <div className="flex-1 border-x-[22px] border-[#606264] bg-[#393939] bg-[linear-gradient(#454545_2px,transparent_2px),linear-gradient(90deg,#454545_2px,transparent_2px)] bg-[size:64px_64px] bg-[position:2px_2px]" />
        <svg width="1300" height="400" fill="none" className="absolute top-0 left-0" aria-hidden="true">
          <path
            d="M456 161C520 161 560 164 632 164M332 337C480 337 500 198 632 198M989 198C1100 198 1100 231 1216 231"
            stroke="#efa04a"
            strokeWidth="2"
          />
        </svg>
        <XNode title="Plane" className="top-[110px] left-[344px] h-16 w-[110px]" rows={[{ out: { text: "Object", wired: true } }]} />
        <XNode
          title="Point"
          selected
          className="top-[104px] left-[632px] h-[116px] w-[358px]"
          bodyClass="pt-1"
          rows={[
            { in: { text: "Object", wired: true }, out: { text: "Point Count" } },
            { in: { text: "Point Index", wired: true }, out: { text: "Point Position", wired: true } },
          ]}
        />
        <XNode
          title="hinge"
          className="top-[110px] left-[1218px] h-[158px] w-48"
          bodyClass="pt-3"
          rowClass="h-[50px]"
          rows={[{ in: { text: "Global Matrix" } }, { in: { text: "Global Position", wired: true } }]}
        />
        <XNode title="hinge" className="top-[286px] left-[220px] h-16 w-[110px]" rows={[{ out: { text: "index", wired: true } }]} />
      </div>
    </div>
  );
}

function XPresso() {
  return (
    <section className="mt-1 flex h-[528px] shrink-0 flex-col border-b-2 border-[#1f1f1f]">
      <div className="flex h-[34px] shrink-0 items-center bg-[#1e1e1e] pl-2 text-[#d4d4d4]">
        <button aria-label="Close XPresso Editor" className="mr-6 w-4 text-[#a6a6a6]">
          <Svg size={16}>
            <path d="M2 2L14 14M14 2L2 14" stroke="currentColor" strokeWidth="3" />
          </Svg>
        </button>
        XPresso Editor
      </div>
      <div className="flex h-[52px] shrink-0 items-center gap-5 border-b-2 border-[#222] pl-3 text-[#8c8c8c]">
        <Burger />
        <Menu items={["File", "Edit", "Layout", "View", "Custom", "Calculate"]} className="gap-[30px] pb-1" />
      </div>
      <div className="flex min-h-0 flex-1">
        <XPool />
        <XGroup />
      </div>
    </section>
  );
}

/* ---------- timeline ---------- */

const frames = Array.from({ length: 91 }, (_, i) => i);
const at = (f: number) => ({ left: `${(f / 90) * 100}%` });

function Timeline() {
  return (
    <section className="flex h-[172px] shrink-0 flex-col">
      <Grip className="mt-1 mb-1 ml-1.5 h-3 shrink-0" />
      <div className="flex shrink-0 items-center pr-1.5">
        <Grip className="mr-1.5 h-9 w-2" />
        <ToolGroup tools={[{ art: icon.diamond, label: "Keyframe" }]} />
        <div className="flex flex-1 items-center pl-[506px]">
          <ToolGroup
            tools={[
              { art: icon.toStart, label: "Go to start" },
              { art: icon.prevKey, label: "Previous key" },
              { art: icon.prevFrame, label: "Previous frame" },
              { art: icon.play, label: "Play" },
              { art: icon.nextFrame, label: "Next frame" },
              { art: icon.nextKey, label: "Next key" },
              { art: icon.toEnd, label: "Go to end" },
            ]}
          />
          <ToolGroup
            className="ml-5"
            tools={[
              { art: icon.loop, label: "Loop", on: true, more: true },
              { art: icon.frames, label: "All frames", on: true, more: true },
              { art: icon.sound, label: "Sound" },
            ]}
          />
          <input
            aria-label="Current frame"
            defaultValue="0 F"
            className="mx-[22px] h-[34px] w-[166px] rounded-md bg-[#1c1c1c] pb-1 text-center text-[#d4d4d4]"
          />
          <ToolGroup
            tools={[
              { art: icon.record, label: "Record", more: true },
              { art: icon.autoKey, label: "Autokey" },
              { art: icon.keyGear, label: "Key settings" },
            ]}
          />
          <ToolGroup
            className="ml-5"
            tools={[
              { art: icon.mouse, label: "Cappucino" },
              { art: icon.gauge, label: "Motion" },
            ]}
          />
          <ToolGroup
            className="ml-5"
            tools={[
              { art: icon.keyMove, label: "Position" },
              { art: icon.keyRotate, label: "Rotation" },
              { art: icon.keyScale, label: "Scale" },
              { art: icon.keyParam, label: "Parameter" },
              { art: icon.keyPla, label: "Point level", on: true },
            ]}
          />
        </div>
        <ToolGroup tools={[{ art: icon.curve, label: "F-Curves" }]} />
      </div>

      <div className="flex flex-1">
        <Grip className="mt-2 mb-3 w-2 shrink-0" />
        <div className="flex flex-1 flex-col">
          <div className="relative mr-[27px] ml-[35px] h-[54px]">
            <div className="absolute top-[34px] -right-[25px] -left-[25px] h-0.5 bg-[#3a3a3a]" />
            <div className="absolute top-1 -left-[9px] h-[30px] w-[18px] bg-[#6a70b0]" />
            {frames.map((f) => (
              <span
                key={f}
                style={at(f)}
                className={clsx(
                  "absolute -ml-px w-0.5 bg-[#8e8e8e]",
                  f && f % 30 === 0 ? "top-1.5 h-[42px]" : f === 0 ? "top-8 h-4" : f % 5 === 0 ? "top-10 h-2" : "top-10 h-1.5",
                )}
              />
            ))}
            {frames.filter((f) => f % 5 === 0).map((f) => (
              <span
                key={f}
                style={at(f)}
                className={clsx(
                  "absolute top-0 leading-[30px]",
                  f === 0 ? "pl-3 text-[#6a70b0]" : "-ml-0.5 -translate-x-1/2 text-[#a6a6a6]",
                )}
              >
                {f}
              </span>
            ))}
          </div>
          <div className="flex h-[34px] gap-[14px] pl-2 text-[#d4d4d4]">
            <input aria-label="Start frame" defaultValue="0 F" className="w-[166px] rounded-md bg-[#1c1c1c] pb-1 text-center" />
            <div className="flex flex-1 items-center rounded-md bg-[#3c3c3c] px-2.5 font-medium">
              <span className="mr-3 h-4 w-2.5 border-x-2 border-[#555]" />
              <span className="pb-0.5">0 F</span>
              <span className="ml-auto pb-0.5">90 F</span>
              <span className="ml-4 h-4 w-2.5 border-x-2 border-[#555]" />
            </div>
            <input aria-label="End frame" defaultValue="90 F" className="w-[166px] rounded-md bg-[#1c1c1c] pr-1 pb-1 text-center" />
          </div>
        </div>
      </div>
      <div className="h-2 shrink-0" />
    </section>
  );
}

/* ---------- attribute manager ---------- */

const Key = () => (
  <svg width="28" height="28" className="shrink-0" fill="none" aria-hidden="true">
    <circle cx="14" cy="14" r="13" stroke="#252525" strokeWidth="2" />
    <path d="M14 6L22 14L14 22L6 14z" stroke="#b0b0b0" strokeWidth="2" />
  </svg>
);

const Caret = ({ className }: { className?: string }) => (
  <svg width="14" height="8" className={clsx("pointer-events-none", className)} aria-hidden="true">
    <path d="M0 0H14L7 8z" fill="#b0b0b0" />
  </svg>
);

function AttributeBody({ title, className, floating }: { title: string; className?: string; floating?: boolean }) {
  const id = useId();
  return (
    <div className={clsx("flex flex-col pt-3 pl-4", className)}>
      <div className="flex h-[34px] items-center">
        <span className="-ml-0.5 text-[#8c8c8c]"><Gears /></span>
        <span className="ml-2.5 pb-1 whitespace-nowrap text-[#a6a6a6]">{title}</span>
        <div className="relative ml-auto flex h-[34px] shrink-0">
          <select
            aria-label="Layout preset"
            defaultValue="Custom"
            className={clsx(
              "h-full w-[220px] appearance-none rounded-l-full rounded-r-lg pb-1 pl-3.5 text-[#d0d0d0]",
              floating ? "bg-[#5a5a5a]" : "bg-[#3c3c3c]",
            )}
          >
            <option>Custom</option>
          </select>
          <span className="pointer-events-none absolute inset-y-0 right-[38px] w-0.5 bg-[#2b2b2b]" />
          <Caret className="absolute top-3 right-3" />
        </div>
      </div>
      <div className="mt-3 flex h-9 gap-2">
        <button className="w-[94px] rounded-lg bg-[#3c3c3c] pb-0.5 text-[#d0d0d0]">Basic</button>
        <button className="w-[92px] rounded-lg bg-[#555b96] pb-0.5 font-medium text-white">Node</button>
      </div>
      <h2 className="h-14 leading-[56px] font-medium text-white">Node Properties</h2>
      <div className="flex h-[34px] items-center">
        <Key />
        <label htmlFor={`${id}-mode`} className="w-[250px] shrink-0 pb-0.5 pl-4 text-[#a6a6a6]">Matrix Mode</label>
        <div className="relative mr-0.5 h-full flex-1">
          <select
            id={`${id}-mode`}
            defaultValue="Global"
            className="h-full w-full appearance-none rounded-lg bg-[#3c3c3c] pb-1 pl-3.5 text-[#d0d0d0]"
          >
            <option>Global</option>
            <option>Local</option>
          </select>
          <Caret className="absolute top-4 right-3" />
        </div>
      </div>
      <div className="flex h-10 items-center">
        <Key />
        <label htmlFor={`${id}-deformed`} className="w-[250px] shrink-0 pb-0.5 pl-4 whitespace-nowrap text-[#a6a6a6]">
          Use Deformed Points
        </label>
        <span className="relative h-6 w-6">
          <input
            id={`${id}-deformed`}
            type="checkbox"
            defaultChecked
            className="peer block h-6 w-6 appearance-none rounded bg-[#3c3c3c] checked:bg-[#5a60a4]"
          />
          <svg
            width="24"
            height="24"
            fill="none"
            className="pointer-events-none absolute inset-0 opacity-0 peer-checked:opacity-100"
            aria-hidden="true"
          >
            <path d="M6 12L10 16L18 7" stroke="#fff" strokeWidth="3" />
          </svg>
        </span>
      </div>
    </div>
  );
}

function FloatingAttributes() {
  return (
    <div className="absolute right-[1000px] bottom-[252px] flex h-[566px] w-[530px] flex-col overflow-hidden rounded-[22px] border-2 border-[#6a6a6a] bg-[#2b2b2b] shadow-[0_20px_70px_10px_rgba(0,0,0,0.5),0_0_0_1px_#000]">
      <div className="relative flex h-14 shrink-0 items-center justify-center border-b-2 border-black bg-[#3e3636]">
        <div className="absolute left-3.5 flex gap-4">
          <button aria-label="Close" className="h-6 w-6 rounded-full bg-[#ed6a5e]" />
          <button aria-label="Minimize" className="h-6 w-6 rounded-full bg-[#f4bf4f]" />
          <button aria-label="Zoom" className="h-6 w-6 rounded-full bg-[#61c554]" />
        </div>
        <span className="pb-0.5 text-[26px] font-bold text-[#b6b0b0]">Attributes (2)</span>
      </div>
      <div className="flex h-11 shrink-0 items-center border-b-2 border-[#222] pr-1 pl-2.5">
        <Burger className="text-white" />
        <button className="ml-5 pb-1.5 text-[#a6a6a6]">Mode</button>
        <svg width="10" height="16" fill="none" className="ml-[30px]" aria-hidden="true">
          <path d="M1 1L9 8L1 15" stroke="#a6a6a6" strokeWidth="2.5" />
        </svg>
        <HeadIcons
          names={[
            ["back", "Back"],
            ["forward", "Forward", "text-[#484848]"],
            ["up", "Up", "text-[#484848]"],
            ["search", "Search"],
            ["filter", "Filter"],
            ["locked", "Unlock", "text-white"],
            ["target", "Focus"],
            ["external", "New window"],
          ]}
        />
      </div>
      <AttributeBody title="Point Operator [Poi..." floating className="-ml-0.5 pr-3" />
    </div>
  );
}

/* ---------- object manager ---------- */

const objects = [
  {
    name: "Plane",
    child: false,
    art: (
      <Svg size={28}>
        <path d="M13 5L21 24H5z" fill="#8fd4f5" />
        <circle cx="13" cy="3" r="3" fill="#fff" />
        <circle cx="3" cy="24" r="3" fill="#fff" />
        <circle cx="23" cy="24" r="3" fill="#fff" />
      </Svg>
    ),
    tags: (
      <>
        <Svg size={26}>
          <path d="M1 26V2H26" stroke="#9a9ae8" strokeWidth="3" />
          <path d="M5 6H17Q17 16 5 19z" fill="#b0b0b0" />
        </Svg>
        <Svg size={26}>
          <path d="M0 0H26V26H0z" fill="#b0b0b0" />
          <path d="M3 3H13V13H3zM13 13H23V23H13z" fill="#222" />
        </Svg>
      </>
    ),
  },
  {
    name: "Bend",
    child: true,
    art: (
      <Svg size={26}>
        <path d="M2 6L10 2Q21 5 22 19L14 24Q8 21 6 18Q5 14 2 12zM7 8Q12 10 14 19" stroke="#9c9cff" strokeWidth="2" />
      </Svg>
    ),
    tags: null,
  },
  {
    name: "hinge",
    child: false,
    art: (
      <Svg size={28} className="text-[#c3cff5]">
        <path d="M4 3V24H23" stroke="currentColor" strokeWidth="2" />
        <path d="M4 1L7 6H1zM27 24L22 21V27z" fill="currentColor" />
        <circle cx="18" cy="9" r="7" fill="currentColor" />
      </Svg>
    ),
    tags: (
      <Svg size={26}>
        <path d="M0 9H7V17H0zM9 9H16V17H9zM18 9H26V17H18zM18 0H26V7H18zM18 19H26V26H18z" fill="#9a9af0" />
      </Svg>
    ),
  },
];

function ObjectManager() {
  return (
    <section className="flex h-[882px] shrink-0 flex-col">
      <Tabs items={["Objects", "Takes"]} active="Objects" />
      <div className="flex h-[46px] shrink-0 items-center gap-[21px] border-b-2 border-[#222] pr-0.5 pl-3 text-[#8c8c8c]">
        <Burger />
        <Menu items={["File", "Edit", "View", "Object", "Tags", "Bookmarks"]} hot={["Tags"]} className="gap-[29px] pb-1.5" />
        <HeadIcons names={[["search", "Search"], ["home", "Home"], ["filter", "Filter"], ["external", "New window"]]} />
      </div>
      <div className="relative mt-0.5 min-h-0 flex-1">
        <div className="absolute inset-y-0 left-[257px] w-0.5 bg-[#222]" />
        <ul>
          {objects.map((o) => (
            <li key={o.name} className="flex h-10 items-center odd:bg-[#262626]">
              <div className={clsx("flex w-[168px] items-center", o.child ? "pl-[62px]" : "pl-9")}>
                {o.art}
                <span className="pb-0.5 pl-2 text-[#a6a6a6]">{o.name}</span>
              </div>
              <svg width="50" height="36" fill="none" aria-hidden="true">
                <rect x="2" y="8" width="20" height="20" rx="4" fill="#575757" />
                <path d="M8 23L16 13" stroke="#2b2b2b" strokeWidth="3" />
                <circle cx="40" cy="9" r="6" fill="#575757" />
                <circle cx="40" cy="28" r="6" fill="#575757" />
              </svg>
              <svg width="48" height="20" fill="none" aria-hidden="true">
                {o.child && <path d="M6 10L13 17L28 2" stroke="#86e08c" strokeWidth="4" />}
              </svg>
              <div className="flex gap-3.5">{o.tags}</div>
            </li>
          ))}
        </ul>
        {/* hierarchy lines */}
        <svg width="80" height="120" fill="none" className="absolute top-0 left-0" aria-hidden="true">
          <path d="M17 0V101H33M41 40V61H57M27 21H33" stroke="#4f4f4f" strokeWidth="2" />
          <path d="M9 13H26V29H9z" fill="#262626" stroke="#8c8c8c" strokeWidth="2" />
          <path d="M12 21H22" stroke="#8c8c8c" strokeWidth="2" />
        </svg>
      </div>
    </section>
  );
}

function AttributeManager() {
  return (
    <section className="flex min-h-0 flex-1 flex-col border-t-4 border-[#222]">
      <Tabs items={["Attributes", "Layers"]} active="Attributes" />
      <div className="flex h-[46px] shrink-0 items-center gap-[21px] border-b-2 border-[#222] pr-0.5 pl-3 text-[#8c8c8c]">
        <Burger />
        <Menu items={["Mode", "Edit", "User Data"]} className="gap-[29px] pb-1.5" />
        <HeadIcons
          names={[
            ["back", "Back"],
            ["forward", "Forward", "text-[#484848]"],
            ["up", "Up"],
            ["search", "Search"],
            ["filter", "Filter"],
            ["lock", "Lock"],
            ["target", "Focus"],
            ["external", "New window"],
          ]}
        />
      </div>
      <AttributeBody title="Point Operator [Point]" className="pr-2.5" />
    </section>
  );
}

/* ---------- window chrome ---------- */

const layouts = ["Model", "Sculpt", "UVEdit", "Paint", "Groom", "Track", "Script", "Nodes"];

function TitleTabs() {
  return (
    <div className="flex h-[46px] shrink-0 items-stretch bg-[#1c1c1c]">
      <div className="flex w-28 items-center gap-3.5 pl-4">
        <button aria-label="Undo" className="text-[#b3b3b3]">
          <svg width="33" height="18" fill="none" aria-hidden="true">
            <path d="M7 11Q22 -5 31 16" stroke="currentColor" strokeWidth="4" />
            <path d="M1 1V17H15z" fill="currentColor" />
          </svg>
        </button>
        <button aria-label="Redo" className="text-[#5a5a5a]">
          <svg width="33" height="18" fill="none" aria-hidden="true">
            <path d="M26 11Q11 -5 2 16" stroke="currentColor" strokeWidth="4" />
            <path d="M32 1V17H18z" fill="currentColor" />
          </svg>
        </button>
      </div>
      <div className="mt-1 flex w-[188px] items-center justify-between bg-[#2b2b2b] px-3.5 pb-1 font-medium text-[#e0e0e0]">
        Untitled 1 *
        <button aria-label="Close document">
          <Svg size={16}>
            <path d="M3 3L13 13M13 3L3 13" stroke="currentColor" strokeWidth="2.5" />
          </Svg>
        </button>
      </div>
      <button aria-label="New document" className="ml-5">
        <Svg size={18}>
          <path d="M9 0V18M0 9H18" stroke="#c0c0c0" strokeWidth="4" />
        </Svg>
      </button>
      <nav className="ml-auto flex items-stretch text-[#8a8a8a]">
        <button className="border-b-[6px] border-[#656bb0] px-3.5 pt-1.5 font-medium text-[#e6e6e6]">Standard</button>
        {layouts.map((l) => (
          <button key={l} className="ml-[54px] px-[14px]">{l}</button>
        ))}
      </nav>
      <button aria-label="Add layout" className="ml-[62px]">
        <Svg size={18}>
          <path d="M9 0V18M0 9H18" stroke="#c0c0c0" strokeWidth="4" />
        </Svg>
      </button>
      <span className="mr-[30px] ml-8 h-7 w-0.5 self-center bg-white" />
      <button className="font-medium text-[#f0f0f0]">New Layouts</button>
      <button aria-label="Toggle new layouts" className="mr-3 ml-8">
        <svg width="34" height="18" aria-hidden="true">
          <rect width="34" height="18" rx="9" fill="#fff" />
          <circle cx="25" cy="9" r="6" fill="#1c1c1c" />
        </svg>
      </button>
    </div>
  );
}

function TopToolbar() {
  return (
    <div className="flex h-[58px] shrink-0 items-start pr-1.5">
      <Grip className="mt-2.5 mr-1.5 h-9 w-2" />
      <ToolGroup tools={[{ art: icon.archive, label: "Asset browser" }]} />
      <ToolGroup
        className="ml-5"
        tools={[
          { art: axisLetter("X", "#d2605c"), label: "X axis" },
          { art: axisLetter("Y", "#7fdc86"), label: "Y axis" },
          { art: axisLetter("Z", "#4a86dc"), label: "Z axis" },
          { art: icon.axisCube, label: "Coordinate system" },
        ]}
      />
      <div className="flex flex-1 justify-center gap-5">
        <ToolGroup
          tools={[
            { art: icon.points, label: "Points", on: true },
            { art: icon.edges, label: "Edges" },
            { art: icon.polys, label: "Polygons" },
            { art: icon.model, label: "Model", more: true },
            { art: icon.texture, label: "Texture" },
          ]}
        />
        <div className="flex gap-2">
          <ToolGroup tools={[{ art: icon.axis, label: "Enable axis" }]} />
          <ToolGroup tools={[{ art: icon.workplane, label: "Viewport solo" }]} />
        </div>
        <ToolGroup
          className="ml-5"
          tools={[
            { art: icon.magnet, label: "Snap", more: true },
            { art: icon.snapGear, label: "Snap settings" },
          ]}
        />
        <ToolGroup
          tools={[
            { art: icon.grid, label: "Workplane" },
            { art: icon.gridLock, label: "Lock workplane", on: true, more: true },
          ]}
        />
        <ToolGroup
          tools={[
            { art: icon.rings, label: "Soft selection" },
            { art: icon.ringGear, label: "Soft selection settings" },
          ]}
        />
        <ToolGroup
          tools={[
            { art: icon.butterfly, label: "Symmetry" },
            { art: icon.lineGear, label: "Symmetry settings" },
          ]}
        />
        <ToolGroup
          tools={[
            { art: icon.hexEye, label: "Isoline" },
            { art: icon.hexA, label: "Auto mode", more: true },
          ]}
        />
      </div>
      <ToolGroup
        tools={[
          { art: icon.clap, label: "Render view", more: true },
          { art: icon.clapPlay, label: "Render", more: true },
          { art: icon.clapGear, label: "Render settings", more: true },
        ]}
      />
      <ToolGroup className="ml-5" tools={[{ art: icon.sphere, label: "Material" }]} />
    </div>
  );
}

function LeftPalette() {
  return (
    <div className="flex w-[76px] shrink-0 flex-col">
      <Grip className="mb-10 ml-1.5 h-4 w-[60px] shrink-0" />
      <SideGroup tools={[{ art: side.search, label: "Search" }]} />
      <SideGroup
        className="mt-5"
        tools={[
          { art: side.liveSelect, label: "Live selection", more: true },
          { art: side.rectSelect, label: "Rectangle selection", more: true },
        ]}
      />
      <SideGroup
        className="mt-5"
        tools={[
          { art: side.move, label: "Move" },
          { art: side.rotate, label: "Rotate", on: true },
          { art: side.scale, label: "Scale" },
        ]}
      />
      <SideGroup className="mt-5" tools={[{ art: side.splinePen, label: "Spline pen", more: true }]} />
      <SideGroup
        className="mt-5"
        tools={[
          { art: side.polyPen, label: "Polygon pen" },
          { art: side.linePen, label: "Line cut" },
          { art: side.inset, label: "Inset", more: true },
        ]}
      />
      <SideGroup
        className="mt-2"
        tools={[
          { art: side.bevelCube, label: "Bevel", more: true },
          { art: side.openCube, label: "Extrude" },
          { art: side.bridge, label: "Bridge" },
          { art: side.lattice, label: "Smooth" },
        ]}
      />
      <SideGroup className="mt-2" tools={[{ art: side.sculpt, label: "Sculpt", more: true }]} />
      <SideGroup
        className="mt-2"
        tools={[
          { art: side.mirror, label: "Mirror" },
          { art: side.knife, label: "Knife", more: true },
        ]}
      />
      <SideGroup
        className="mt-2"
        tools={[
          { art: side.iron, label: "Iron", hot: true },
          { art: side.solidify, label: "Solidify" },
          { art: side.scatter, label: "Set point value" },
          { art: side.extend, label: "Extend" },
        ]}
      />
    </div>
  );
}

function RightPalette() {
  return (
    <div className="flex w-20 shrink-0 flex-col border-r-2 border-[#222] pl-1">
      <Grip className="mb-10 ml-1.5 h-4 w-[60px] shrink-0" />
      <SideGroup tools={[{ art: side.nullObj, label: "Null" }]} />
      <SideGroup
        className="mt-5"
        tools={[
          { art: side.rectSpline, label: "Rectangle", more: true },
          { art: side.cube, label: "Cube", more: true },
          { art: side.text, label: "Text", more: true },
        ]}
      />
      <SideGroup
        className="mt-5"
        tools={[
          { art: side.subdiv, label: "Subdivision surface", hot: true },
          { art: side.cloner, label: "Cloner", more: true },
          { art: side.field, label: "Volume builder", more: true },
        ]}
      />
      <SideGroup
        className="mt-2"
        tools={[
          { art: side.bend, label: "Bend", hot: true },
          { art: side.axisDeform, label: "Deformer", more: true },
        ]}
      />
      <SideGroup className="mt-2" tools={[{ art: side.mograph, label: "Effector", more: true }]} />
      <SideGroup
        className="mt-5"
        tools={[
          { art: side.light, label: "Light", more: true },
          { art: side.camera, label: "Camera", more: true },
          { art: side.stage, label: "Stage", more: true },
        ]}
      />
      <SideGroup className="mt-10" tools={[{ art: side.editObj, label: "Make editable", more: true }]} />
    </div>
  );
}

export default function App() {
  return (
    <div className="relative flex h-screen flex-col overflow-hidden bg-[#2b2b2b] font-['Inter',sans-serif] text-[22px] leading-7 text-[#a6a6a6]">
      <div className="h-2 shrink-0 border-b-2 border-black bg-[#2f292e]" />
      <TitleTabs />
      <Menu
        className="h-[54px] shrink-0 gap-[29px] pl-4"
        items={[
          "File", "Edit", "Create", "Modes", "Select", "Tools", "Spline", "Mesh", "Volume", "MoGraph",
          "Character", "Animate", "Simulate", "Tracker", "Render", "Redshift", "Extensions", "Arnold",
          "Window", "Help",
        ]}
        hot={["File", "Create", "Modes", "Select", "Spline", "Mesh", "Character", "Simulate"]}
      />

      <div className="flex min-h-0 flex-1">
        <LeftPalette />
        <main className="flex min-w-0 flex-1 flex-col">
          <TopToolbar />
          <Tabs items={["View"]} active="View" />
          <div className="flex h-11 shrink-0 items-center gap-5 pr-[11px] pl-3 text-[#8c8c8c]">
            <Burger />
            <Menu
              items={["View", "Cameras", "Display", "Options", "Filter", "Panel", "Redshift"]}
              hot={["Options"]}
              className="gap-[30px] pb-1.5"
            />
            <HeadIcons names={[["hand", "Pan"], ["dolly", "Dolly"], ["orbit", "Orbit"], ["panes", "Toggle views"]]} />
          </div>
          <Viewport />
          <XPresso />
          <Timeline />
        </main>
        <RightPalette />
        <aside className="flex w-[888px] shrink-0 flex-col">
          <ObjectManager />
          <AttributeManager />
        </aside>
      </div>

      <footer className="flex h-[34px] shrink-0 items-start gap-[68px] overflow-hidden bg-[#1c1c1c] pt-3 pl-2.5 leading-[22px] whitespace-nowrap">
        <Burger className="mt-0.5 text-[#8c8c8c]" />
        Rotate: Click and drag to rotate elements. Hold down SHIFT to add to quantize rotation / add to the selection in point mode, CTRL to remove.
      </footer>

      <FloatingAttributes />
    </div>
  );
}
